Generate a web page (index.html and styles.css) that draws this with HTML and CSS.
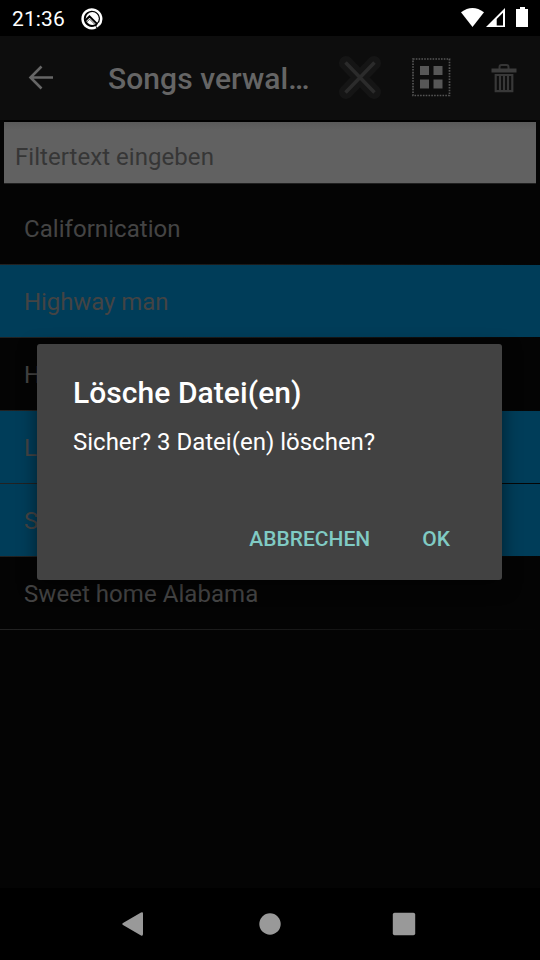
FILE: index.html
```html
<!DOCTYPE html>
<html lang="de">
<head>
<meta charset="utf-8">
<title>Songs verwalten</title>
<link rel="stylesheet" href="styles.css">
</head>
<body>
<div class="screen">
  <header class="status">
    <span class="clock">21:36</span>
    <svg class="notice" width="24" height="24" viewBox="0 0 24 24"><path d="M18.600 19.300A9.300 9.300 0 1 0 16 21.200" fill="none" stroke="#fff" stroke-width="2.500"/><circle cx="12.300" cy="12.500" r="6.500" fill="#fff"/><path d="M5.500 14.200l4-3.800 9.500 9.500" fill="none" stroke="#000" stroke-width="2"/><path d="M7 15.700l2.700-2.500 5.500 5.500" fill="none" stroke="#000" stroke-width=".7"/><path d="M19.500 17l-2.500 4" stroke="#fff" stroke-width="2"/></svg>
    <svg class="signals" width="70" height="24" viewBox="0 0 70 24"><path d="M1 6.3Q12.500-2.500 24 6.300L12.500 21Z" fill="#fff"/><path fill-rule="evenodd" d="M26 21L45 2V21ZM36.700 13V19.500H43V6.800Z" fill="#fff"/><path d="M56 3h4V1h5v2h3v18H56Z" fill="#fff"/></svg>
  </header>
  <div class="appbar">
    <svg class="back" width="36" height="36" viewBox="0 0 36 36"><path d="M31 17.500H9M19.500 6.500l-11 11 11 11" fill="none" stroke="#666" stroke-width="2.600"/></svg>
    <h1 class="title">Songs verwal…</h1>
    <svg class="actions" width="220" height="84" viewBox="0 0 220 84">
      <path d="M26 27l28 29M54 27L26 56" fill="none" stroke="#151515" stroke-width="14" stroke-linecap="round"/>
      <path d="M25.500 26.500l29 30M54.500 26.500l-29 30" fill="none" stroke="#2b2b2b" stroke-width="3.500"/>
      <rect x="93" y="23" width="36.500" height="36.500" fill="none" stroke="#555" stroke-width="1.700" stroke-dasharray="1.600 1.200"/>
      <path d="M100 30h9v9h-9ZM113.500 30h9v9h-9ZM100 43.500h9v9h-9ZM113.500 43.500h9v9h-9Z" fill="#575757"/>
      <path d="M179.500 33v-2q0-2 2-2h5q2 0 2 2v2" fill="none" stroke="#363636" stroke-width="2"/>
      <path d="M171.500 32.500h25v4h-25Z" fill="#3c3c3c"/>
      <path d="M175.700 39V55.200H192.300V39ZM180 38v17M184 38v17M188 38v17" fill="none" stroke="#383838" stroke-width="2.200"/>
    </svg>
  </div>
  <div class="filter">Filtertext eingeben</div>
  <ul class="songs">
    <li>Californication</li>
    <li class="selected">Highway man</li>
    <li>H</li>
    <li class="selected">L</li>
    <li class="selected">S</li>
    <li>Sweet home Alabama</li>
  </ul>
  <nav class="navbar">
    <svg width="540" height="72" viewBox="0 0 540 72" fill="#999"><path d="M123 35L141 24.500q2-1 2 1V46q0 2.500-2 1.500L123 37q-1.800-1 0-2Z"/><circle cx="270" cy="36" r="10.700"/><rect x="392.800" y="24.800" width="22.400" height="22.400" rx="1.800"/></svg>
  </nav>
  <section class="dialog">
    <h2>Lösche Datei(en)</h2>
    <p>Sicher? 3 Datei(en) löschen?</p>
    <div class="buttons"><span>ABBRECHEN</span><span>OK</span></div>
  </section>
</div>
</body>
</html>
```
FILE: styles.css
```css
* { box-sizing: border-box; }
body { margin: 0; background: #000; font-family: Roboto, "Liberation Sans", sans-serif; }
h1, h2, p, ul { margin: 0; padding: 0; }
svg { display: block; flex: none; }
.screen { position: relative; display: flex; flex-direction: column; width: 540px; height: 960px; overflow: hidden; background: #040404; }
.status { display: flex; height: 36px; flex: none; padding: 6px 10px 0 12px; background: #000; color: #fff; }
.clock { width: 68px; font-size: 21px; line-height: 27px; letter-spacing: .1px; }
.signals { margin-left: auto; }
.appbar { display: flex; align-items: center; height: 84px; flex: none; padding-left: 22px; background: #0d0d0d; color: #656565; }
.title { width: 212px; margin-left: 50px; padding-top: 2px; font-size: 30px; font-weight: 500; line-height: 36px; letter-spacing: .06px; white-space: nowrap; }
.back { margin-bottom: 1px; }
.filter { height: 61px; flex: none; margin: 2px 4px 9px; padding: 0 11px; background: linear-gradient(#5a5a5a, #616161 8px); box-shadow: 0 1px #202020, 0 -2px #000; color: #363636; font-size: 24px; line-height: 70px; letter-spacing: .05px; }
.songs { list-style: none; color: #444; font-size: 24px; letter-spacing: .05px; }
.songs li { height: 73px; padding-left: 24px; line-height: 74px; background: linear-gradient(90deg, #222, #1a1a1a 50%, #040404) 0 100% / 100% 1px no-repeat; }
.songs .selected { background-color: #003d59; letter-spacing: -.08px; }
.navbar { height: 72px; margin-top: auto; background: #000; }
.dialog { position: absolute; left: 37px; top: 344px; width: 465px; height: 236px; padding: 31px 36px 0; border-radius: 3px; background: #424242; box-shadow: 0 5px 18px rgba(0,0,0,.5); color: #fff; }
.dialog h2 { font-size: 30px; font-weight: 500; line-height: 36px; letter-spacing: .06px; }
.dialog p { margin-top: 16px; font-size: 24px; line-height: 30px; }
.buttons { display: flex; justify-content: flex-end; gap: 52px; margin-top: 67px; padding-right: 16px; color: #80cbc4; font-size: 21px; font-weight: 500; line-height: 30px; }
```
